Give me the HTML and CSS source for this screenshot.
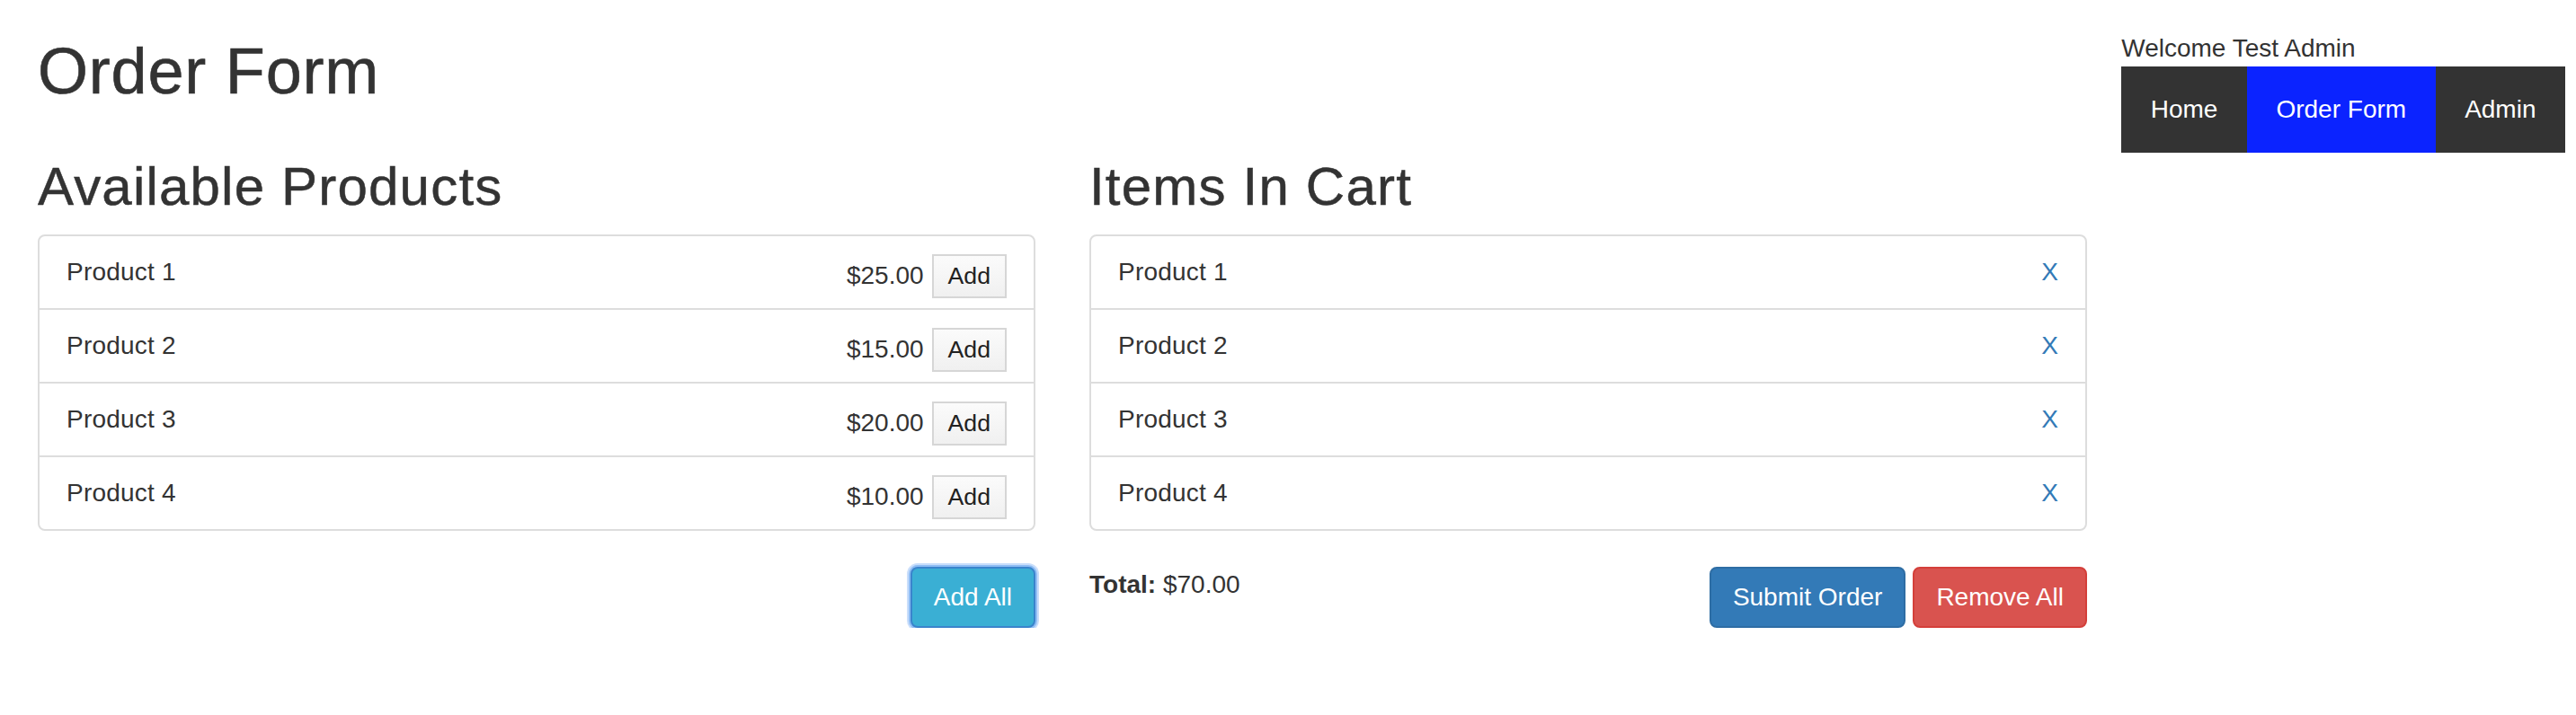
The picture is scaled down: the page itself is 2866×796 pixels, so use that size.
FILE: index.html
```html
<!DOCTYPE html>
<html lang="en">
<head>
<meta charset="utf-8">
<title>Order Form</title>
<link rel="stylesheet" href="styles.css">
</head>
<body>
<div class="page">
  <main class="main">
    <h1 class="title">Order Form</h1>
    <div class="cols">
      <section class="col">
        <h2 class="heading">Available Products</h2>
        <ul class="list">
          <li class="item"><span class="name">Product 1</span><span class="buy"><span class="price">$25.00</span><button class="add-btn">Add</button></span></li>
          <li class="item"><span class="name">Product 2</span><span class="buy"><span class="price">$15.00</span><button class="add-btn">Add</button></span></li>
          <li class="item"><span class="name">Product 3</span><span class="buy"><span class="price">$20.00</span><button class="add-btn">Add</button></span></li>
          <li class="item"><span class="name">Product 4</span><span class="buy"><span class="price">$10.00</span><button class="add-btn">Add</button></span></li>
        </ul>
        <div class="actions actions-end">
          <button class="btn btn-info">Add All</button>
        </div>
      </section>
      <section class="col">
        <h2 class="heading">Items In Cart</h2>
        <ul class="list">
          <li class="item"><span class="name">Product 1</span><a class="remove" href="#">X</a></li>
          <li class="item"><span class="name">Product 2</span><a class="remove" href="#">X</a></li>
          <li class="item"><span class="name">Product 3</span><a class="remove" href="#">X</a></li>
          <li class="item"><span class="name">Product 4</span><a class="remove" href="#">X</a></li>
        </ul>
        <div class="actions actions-split">
          <div class="total"><strong>Total:</strong> $70.00</div>
          <div class="btn-group">
            <button class="btn btn-primary">Submit Order</button>
            <button class="btn btn-danger">Remove All</button>
          </div>
        </div>
      </section>
    </div>
  </main>
  <aside class="side">
    <div class="welcome">Welcome Test Admin</div>
    <nav class="nav">
      <a class="nav-link" href="#">Home</a>
      <a class="nav-link nav-active" href="#">Order Form</a>
      <a class="nav-link" href="#">Admin</a>
    </nav>
  </aside>
</div>
</body>
</html>
```

FILE: styles.css
```css
* { box-sizing: border-box; }

html, body {
  margin: 0;
  padding: 0;
  background: #fff;
}

body {
  font-family: "Liberation Sans", Arial, Helvetica, sans-serif;
  font-size: 28px;
  line-height: 40px;
  color: #333;
}

.page {
  display: flex;
  justify-content: space-between;
  align-items: flex-start;
  padding: 0 12px;
}

.main {
  width: 2340px;
  flex: none;
}

.title {
  margin: 40px 30px 20px;
  font-size: 72px;
  line-height: 1.1;
  font-weight: normal;
  letter-spacing: 0.8px;
  -webkit-text-stroke: 0.6px #333;
}

.cols {
  display: grid;
  grid-template-columns: 1fr 1fr;
}

.col {
  padding: 0 30px;
}

.heading {
  margin: 36px 0 20px;
  font-size: 60px;
  line-height: 1.1;
  font-weight: normal;
  letter-spacing: 1.2px;
  -webkit-text-stroke: 0.5px #333;
}

.list {
  list-style: none;
  margin: 0 0 40px;
  padding: 0;
  border: 2px solid #ddd;
  border-radius: 8px;
}

.item {
  display: flex;
  justify-content: space-between;
  align-items: flex-start;
  height: 82px;
  padding: 20px 30px;
  border-top: 2px solid #ddd;
}

.item:first-child {
  border-top: 0;
  height: 80px;
}

.name {
  line-height: 40px;
  letter-spacing: 0.2px;
}

.buy {
  display: flex;
  align-items: baseline;
  gap: 9px;
}

.price {
  line-height: 40px;
}

.add-btn {
  font-family: "Liberation Sans", Arial, sans-serif;
  font-size: 26.67px;
  line-height: 31px;
  color: #222;
  padding: 7px 16px;
  border: 2px solid #d6d6d6;
  border-radius: 0;
  background: linear-gradient(#fbfbfb, #f0f0f0);
  margin: 0;
}

.remove {
  color: #337ab7;
  text-decoration: none;
  line-height: 40px;
}

.actions {
  display: flex;
  align-items: flex-start;
}

.actions-end {
  justify-content: flex-end;
}

.actions-split {
  justify-content: space-between;
}

.btn-group {
  display: flex;
  gap: 8px;
}

.btn {
  font-family: "Liberation Sans", Arial, sans-serif;
  font-size: 28px;
  line-height: 40px;
  padding: 12px 24px;
  border: 2px solid transparent;
  border-radius: 8px;
  color: #fff;
  margin: 0;
}

.btn-info {
  background: #3aafd4;
  border-color: #3a84cc;
  box-shadow: 0 0 0 2px #8fbdf4, 0 0 0 4px #c9defb;
}

.btn-primary {
  background: #337ab7;
  border-color: #2e6da4;
}

.btn-danger {
  background: #d9534f;
  border-color: #d43f3a;
}

.side {
  margin-top: 34px;
  flex: none;
}

.welcome {
  line-height: 40px;
}

.nav {
  display: flex;
}

.nav-link {
  display: block;
  height: 96px;
  line-height: 96px;
  padding: 0 32.5px;
  background: #333;
  color: #fff;
  text-decoration: none;
}

.nav-active {
  background: #0b23ff;
}
```
